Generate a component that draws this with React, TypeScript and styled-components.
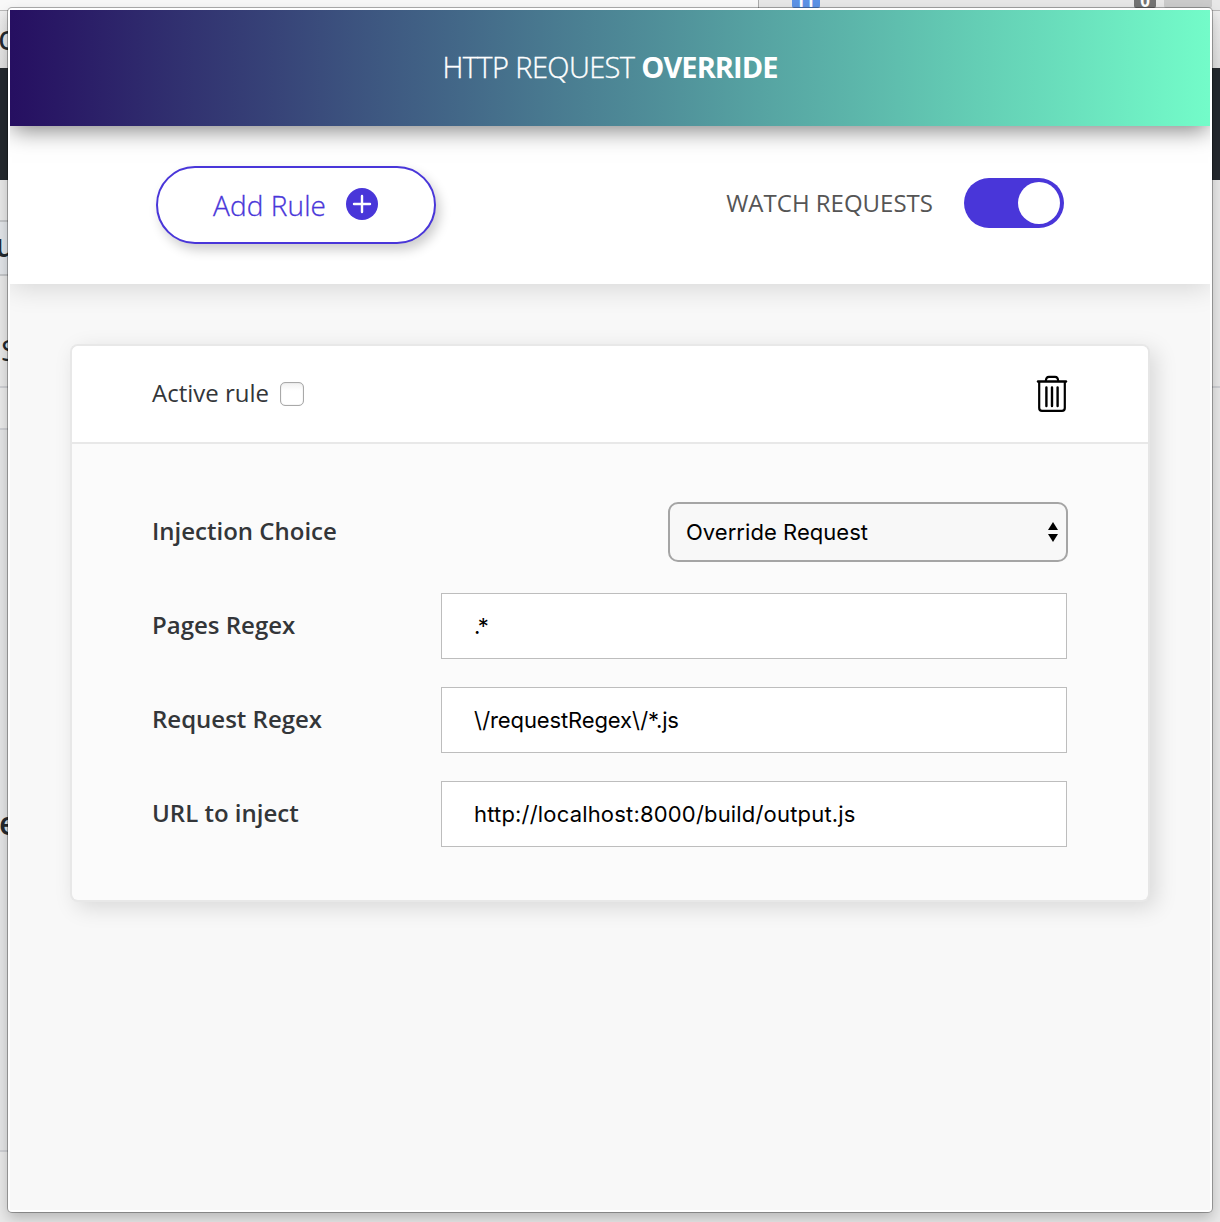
import React, { useState } from "react";
import styled, { createGlobalStyle } from "styled-components";

const GlobalStyle = createGlobalStyle`
  *, *::before, *::after { box-sizing: border-box; }
  body { margin: 0; font-family: "Open Sans", sans-serif; }
`;

const Screen = styled.div`
  position: relative;
  width: 1220px;
  height: 1222px;
  overflow: hidden;
  background: #eaeaea;
`;

const Backdrop = styled.div`
  display: flex;
  flex-direction: column;
  height: 100%;
`;

const BrowserBar = styled.div`
  display: flex;
  height: 11px;
  background: #e8e8e8;
  border-bottom: 1px solid #b8b8b8;
`;

const AddressField = styled.div`
  width: 759px;
  margin-right: 33px;
  background: #f8f8f8;
  border-right: 1px solid #aaa;
`;

const Badge = styled.div<{ $bg: string; $width: number; $gap: number }>`
  display: flex;
  align-items: flex-end;
  justify-content: center;
  width: ${(p) => p.$width}px;
  height: 8px;
  margin-right: ${(p) => p.$gap}px;
  border-radius: 0 0 2px 2px;
  background: ${(p) => p.$bg};
  color: #fff;
  font: 700 17px/15px "Open Sans", sans-serif;
  overflow: hidden;
`;

const Page = styled.div`
  display: flex;
  flex: 1;
  justify-content: space-between;
`;

const PageColumn = styled.div<{ $width: number }>`
  display: flex;
  flex-direction: column;
  width: ${(p) => p.$width}px;
`;

const Band = styled.div<{ $height?: number; $bg: string; $line?: string }>`
  display: flex;
  align-items: center;
  flex: ${(p) => (p.$height ? "none" : "1")};
  height: ${(p) => (p.$height ? `${p.$height}px` : "auto")};
  background: ${(p) => p.$bg};
  border-bottom: ${(p) => (p.$line ? `2px solid ${p.$line}` : "none")};
`;

const Fragment = styled.span<{ $size: number; $weight?: number; $shift: number; $drop?: number; $lift?: number }>`
  margin-left: ${(p) => p.$shift}px;
  padding-top: ${(p) => p.$drop ?? 0}px;
  padding-bottom: ${(p) => p.$lift ?? 0}px;
  font-size: ${(p) => p.$size}px;
  font-weight: ${(p) => p.$weight ?? 400};
  line-height: 1;
  color: #24292e;
`;

const Popup = styled.div`
  position: absolute;
  top: 8px;
  left: 8px;
  width: 1204px;
  height: 1204px;
  display: flex;
  flex-direction: column;
  padding: 2px;
  border-radius: 4px;
  background: #fff;
  box-shadow: 0 0 0 1px rgba(0, 0, 0, 0.3), 0 6px 14px rgba(0, 0, 0, 0.22);
`;

const Header = styled.header`
  z-index: 2;
  display: flex;
  align-items: center;
  justify-content: center;
  height: 116px;
  background: linear-gradient(90deg, #260f61 0%, #73fcc9 100%);
  box-shadow: 0 6px 22px -2px rgba(0, 0, 0, 0.5);
  clip-path: inset(0 0 -40px 0);
`;

const Title = styled.h1`
  margin: 0;
  padding-bottom: 2px;
  font-size: 29px;
  line-height: 40px;
  font-weight: 300;
  letter-spacing: -0.6px;
  color: #fff;
  white-space: nowrap;
  -webkit-text-stroke: 0.35px #fff;

  strong {
    font-weight: 700;
    letter-spacing: -0.95px;
    -webkit-text-stroke: 0;
  }
`;

const Toolbar = styled.section`
  z-index: 1;
  display: flex;
  align-items: flex-start;
  justify-content: space-between;
  height: 158px;
  padding: 40px 146px 0;
  background: #fff;
  box-shadow: 0 4px 26px rgba(0, 0, 0, 0.14);
  clip-path: inset(0 0 -40px 0);
`;

const AddButton = styled.button`
  display: flex;
  align-items: center;
  width: 280px;
  height: 78px;
  padding: 0 0 2px 55px;
  gap: 20px;
  border: 2px solid #4936d9;
  border-radius: 39px;
  background: #fff;
  box-shadow: 4px 6px 12px rgba(0, 0, 0, 0.2);
  color: #4936d9;
  font: 300 28px/40px "Open Sans", sans-serif;
  letter-spacing: 0.1px;
  white-space: nowrap;
  -webkit-text-stroke: 0.3px #4936d9;

  span { padding-top: 2px; }
`;

const WatchGroup = styled.div`
  display: flex;
  align-items: center;
  gap: 31px;
  height: 50px;
  margin-top: 12px;
`;

const WatchLabel = styled.span`
  padding-bottom: 2px;
  font-size: 24px;
  color: #555;
  white-space: nowrap;
`;

const Switch = styled.button<{ $on: boolean }>`
  display: flex;
  align-items: center;
  justify-content: ${(p) => (p.$on ? "flex-end" : "flex-start")};
  width: 100px;
  height: 50px;
  padding: 4px;
  border: 0;
  border-radius: 25px;
  background: ${(p) => (p.$on ? "#4936d9" : "#aaa")};
`;

const Knob = styled.span`
  width: 42px;
  height: 42px;
  border-radius: 50%;
  background: #fff;
`;

const Content = styled.main`
  flex: 1;
  padding: 60px 60px 0;
  background: #f8f8f8;
`;

const Card = styled.article`
  width: 1080px;
  height: 558px;
  border: 2px solid #e8e8e8;
  border-right-color: #e6e6e6;
  border-radius: 8px;
  background: #fbfbfb;
  background-clip: padding-box;
  box-shadow: 6px 6px 22px rgba(0, 0, 0, 0.13);
  overflow: hidden;
`;

const CardHeader = styled.div`
  display: flex;
  align-items: center;
  justify-content: space-between;
  height: 98px;
  padding: 0 80px;
  border-bottom: 2px solid #e8e8e8;
  background: #fff;
`;

const ActiveLabel = styled.label`
  display: flex;
  align-items: center;
  gap: 11px;
  padding-bottom: 2px;
  font-size: 24px;
  line-height: 34px;
  color: #333639;
  white-space: nowrap;
`;

const Checkbox = styled.input`
  appearance: none;
  width: 24px;
  height: 24px;
  margin: 2px 0 0;
  border: 1px solid #a9a9a9;
  border-radius: 5px;
  background: linear-gradient(#f1f1f1, #fff 35%);
  box-shadow: inset 0 0 1px #aaa;
`;

const IconButton = styled.button`
  display: flex;
  margin: 0;
  padding: 0 0 1px;
  border: 0;
  background: none;
`;

const Form = styled.div`
  display: flex;
  flex-direction: column;
  gap: 28px;
  padding: 55px 81px 0 80px;
`;

const Field = styled.div`
  display: flex;
  align-items: center;
  justify-content: space-between;
  height: 66px;

  &:first-child { margin-right: -1px; }
`;

const FieldLabel = styled.label`
  padding-bottom: 2px;
  font-size: 24px;
  line-height: 34px;
  font-weight: 600;
  color: #333639;
  white-space: nowrap;
`;

const TextInput = styled.input<{ $spacing: number }>`
  width: 626px;
  height: 66px;
  padding: 0 32px;
  border: 1px solid #bdbdbd;
  border-radius: 0;
  outline: 0;
  background: #fff;
  color: #000;
  font: 400 22px/30px Inter, sans-serif;
  letter-spacing: ${(p) => p.$spacing}px;
`;

const Select = styled.button`
  display: flex;
  align-items: center;
  justify-content: space-between;
  width: 400px;
  height: 60px;
  padding: 0 8px 0 16px;
  border: 2px solid #a5a5a5;
  border-radius: 10px;
  background: #f8f8f8;
  color: #000;
  font: 400 22px/30px Inter, sans-serif;
  letter-spacing: 0.04px;
`;

const PlusIcon = () => (
  <svg width="32" height="32" viewBox="0 0 32 32">
    <circle cx="16" cy="16" r="16" fill="#4936d9" />
    <path d="M16 8v16M8 16h16" stroke="#fff" strokeWidth="2.4" strokeLinecap="round" />
  </svg>
);

const TrashIcon = () => (
  <svg width="32" height="38" viewBox="0 0 32 38" fill="none" stroke="#000" strokeLinecap="round" strokeLinejoin="round">
    <path d="M2 6.500h28" strokeWidth="2.4" />
    <path d="M9.8 6C10 2.900 11 1.800 13 1.800h6c2 0 3 1.100 3.200 4.200" strokeWidth="2.2" />
    <path d="M3.2 7v26c0 2 .9 2.800 2.800 2.800h20c1.900 0 2.800-.8 2.800-2.800v-26" strokeWidth="2.2" />
    <path d="M10.4 12.500v18.500M16 12.500v18.500M21.6 12.500v18.500" strokeWidth="2.4" />
  </svg>
);

const ArrowsIcon = () => (
  <svg width="10" height="20" viewBox="0 0 10 20">
    <path d="M5 0l5 8H0zM5 20l5-8H0z" fill="#000" />
  </svg>
);

const fields = [
  { id: "pages", label: "Pages Regex", value: ".*", spacing: -2.5 },
  { id: "request", label: "Request Regex", value: "\\/requestRegex\\/*.js", spacing: -0.12 },
  { id: "url", label: "URL to inject", value: "http://localhost:8000/build/output.js", spacing: 0.18 },
];

export default function App() {
  const [watching, setWatching] = useState(true);

  return (
    <>
      <GlobalStyle />
      <Screen>
        <Backdrop>
          <BrowserBar>
            <AddressField />
            <Badge $bg="#5c92e6" $width={28} $gap={314}>TT</Badge>
            <Badge $bg="#747474" $width={22} $gap={8}>0</Badge>
            <Badge $bg="#cbcbcb" $width={48} $gap={0} />
          </BrowserBar>
          <Page>
            <PageColumn $width={610}>
              <Band $height={57} $bg="linear-gradient(#eee, #e0e0e0)">
                <Fragment $size={34} $shift={-2} $lift={6}>c</Fragment>
              </Band>
              <Band $height={112} $bg="#24292e" />
              <Band $height={42} $bg="#e9e9e9" $line="#c4c6c9" />
              <Band $height={54} $bg="#e2e5e9" $line="#c4c6c9">
                <Fragment $size={32} $weight={600} $shift={-5} $lift={6}>u</Fragment>
              </Band>
              <Band $height={112} $bg="#e9e9e9" $line="#cfd0d4">
                <Fragment $size={30} $shift={1} $drop={38}>S</Fragment>
              </Band>
              <Band $height={42} $bg="#ebebeb" $line="#cfd0d4" />
              <Band $height={722} $bg="#e5e6e7" $line="#cfd0d4">
                <Fragment $size={32} $weight={600} $shift={-1} $drop={66}>e</Fragment>
              </Band>
              <Band $bg="#e9e9e9" />
            </PageColumn>
            <PageColumn $width={610}>
              <Band $height={57} $bg="linear-gradient(#eee, #e0e0e0)" />
              <Band $height={112} $bg="#24292e" />
              <Band $height={208} $bg="#e9e9e9" $line="#cfd0d4" />
              <Band $bg="#e9e9e9" />
            </PageColumn>
          </Page>
        </Backdrop>

        <Popup>
          <Header>
            <Title>HTTP REQUEST <strong>OVERRIDE</strong></Title>
          </Header>
          <Toolbar>
            <AddButton type="button">
              <span>Add Rule</span>
              <PlusIcon />
            </AddButton>
            <WatchGroup>
              <WatchLabel>WATCH REQUESTS</WatchLabel>
              <Switch
                type="button"
                role="switch"
                aria-checked={watching}
                $on={watching}
                onClick={() => setWatching(!watching)}
              >
                <Knob />
              </Switch>
            </WatchGroup>
          </Toolbar>
          <Content>
            <Card>
              <CardHeader>
                <ActiveLabel>
                  Active rule
                  <Checkbox type="checkbox" />
                </ActiveLabel>
                <IconButton type="button">
                  <TrashIcon />
                </IconButton>
              </CardHeader>
              <Form>
                <Field>
                  <FieldLabel>Injection Choice</FieldLabel>
                  <Select type="button">
                    Override Request
                    <ArrowsIcon />
                  </Select>
                </Field>
                {fields.map((f) => (
                  <Field key={f.id}>
                    <FieldLabel htmlFor={f.id}>{f.label}</FieldLabel>
                    <TextInput id={f.id} defaultValue={f.value} $spacing={f.spacing} />
                  </Field>
                ))}
              </Form>
            </Card>
          </Content>
        </Popup>
      </Screen>
    </>
  );
}
